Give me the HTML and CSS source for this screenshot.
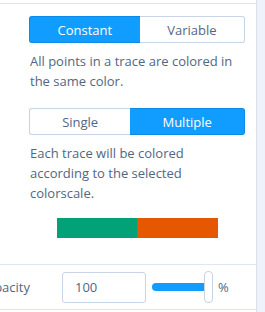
FILE: index.html
```html
<!DOCTYPE html>
<html lang="en">
<head>
    <meta charset="UTF-8">
    <title>Trace color</title>
    <link rel="stylesheet" href="styles.css">
</head>
<body>
    <div class="panel">
        <div class="section">
            <div class="radio-group">
                <button class="radio-btn active">Constant</button>
                <button class="radio-btn">Variable</button>
            </div>
            <p class="info">All points in a trace are colored in the same color.</p>

            <div class="radio-group second">
                <button class="radio-btn">Single</button>
                <button class="radio-btn active">Multiple</button>
            </div>
            <p class="info">Each trace will be colored according to the selected colorscale.</p>

            <div class="scale">
                <span class="swatch green"></span>
                <span class="swatch orange"></span>
            </div>
        </div>

        <div class="field">
            <span class="field-label">Opacity</span>
            <div class="number-input">100</div>
            <div class="slider">
                <span class="slider-fill"></span>
                <span class="slider-handle"></span>
            </div>
            <span class="unit">%</span>
        </div>
    </div>
    <div class="side"></div>
</body>
</html>
```

FILE: styles.css
```css
:root {
    --text: #506784;
    --blue: #119dff;
    --blue-dark: #0b8be6;
    --border: #c8d4e3;
    --line: #dfe6f0;
    --side-bg: #eef3fb;
}

body {
    margin: 0;
    width: 265px;
    height: 312px;
    display: flex;
    font-family: 'Open Sans', 'Noto Sans', sans-serif;
    color: var(--text);
    background: var(--side-bg);
    overflow: hidden;
}

.panel {
    width: 256px;
    background: #ffffff;
    border-right: 1px solid #d9e1ed;
    overflow: hidden;
}

.side {
    flex: 1;
}

.section {
    margin-top: 3px;
    border-top: 1px solid var(--line);
    padding: 12px 11px 26px 29px;
    border-bottom: 1px solid var(--line);
}

.radio-group {
    display: flex;
    height: 27px;
}

.radio-group.second {
    margin-top: 17px;
}

.radio-btn {
    flex: 1 1 auto;
    font-family: inherit;
    font-size: 13px;
    color: var(--text);
    background: #ffffff;
    border: 1px solid var(--border);
    padding: 0 4px;
    margin: 0;
}

.radio-btn:first-child {
    border-radius: 3px 0 0 3px;
    border-right: none;
}

.radio-btn:last-child {
    border-radius: 0 3px 3px 0;
    border-left: none;
}

.radio-btn.active {
    background: var(--blue);
    border-color: var(--blue-dark);
    color: #ffffff;
}

.info {
    max-width: 205px;
    margin: 8px 0 0 1px;
    font-size: 13px;
    line-height: 20px;
}

.scale {
    display: flex;
    justify-content: center;
    margin-top: 15px;
}

.swatch {
    width: 80.5px;
    height: 20px;
}

.green {
    background: #03a177;
}

.orange {
    background: #e55700;
}

.field {
    display: flex;
    align-items: center;
    height: 44px;
    border-bottom: 1px solid var(--line);
}

.field-label {
    width: 50px;
    margin-left: -20px;
    font-size: 13px;
    text-align: right;
}

.number-input {
    width: 70px;
    height: 29px;
    margin-left: 32px;
    padding-left: 12px;
    border: 1px solid var(--border);
    border-radius: 3px;
    font-size: 13px;
    line-height: 29px;
}

.slider {
    display: flex;
    align-items: center;
    margin-left: 6px;
}

.slider-fill {
    width: 53px;
    height: 8px;
    background: var(--blue);
    border-radius: 4px 0 0 4px;
}

.slider-handle {
    width: 7px;
    height: 30px;
    margin-left: -1px;
    background: #ffffff;
    border: 1px solid var(--border);
    border-radius: 4px;
}

.unit {
    margin-left: 5px;
    font-size: 13px;
}
```
